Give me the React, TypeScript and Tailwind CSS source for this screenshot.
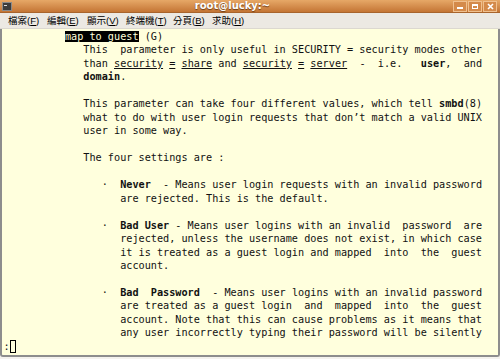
import React from 'react';

type Seg = { t: string; b?: boolean; u?: boolean; r?: boolean };

const L = (...segs: (string | Seg)[]): Seg[] =>
  segs.map((s) => (typeof s === 'string' ? { t: s } : s));

const pad = (n: number) => ' '.repeat(n);

const lines: Seg[][] = [
  L(pad(10), { t: 'map to guest', r: true }, ' (G)'),
  L(pad(13) + 'This  parameter is only useful in SECURITY = security modes other'),
  L(
    pad(13) + 'than ',
    { t: 'security', u: true },
    ' ',
    { t: '=', u: true },
    ' ',
    { t: 'share', u: true },
    ' and ',
    { t: 'security', u: true },
    ' ',
    { t: '=', u: true },
    ' ',
    { t: 'server', u: true },
    '  -  i.e.   ',
    { t: 'user', b: true },
    ',  and'
  ),
  L(pad(13), { t: 'domain', b: true }, '.'),
  L(''),
  L(pad(13) + 'This parameter can take four different values, which tell ', { t: 'smbd', b: true }, '(8)'),
  L(pad(13) + 'what to do with user login requests that don’t match a valid UNIX'),
  L(pad(13) + 'user in some way.'),
  L(''),
  L(pad(13) + 'The four settings are :'),
  L(''),
  L(pad(16) + '·  ', { t: 'Never', b: true }, '  - Means user login requests with an invalid password'),
  L(pad(19) + 'are rejected. This is the default.'),
  L(''),
  L(pad(16) + '·  ', { t: 'Bad User', b: true }, ' - Means user logins with an invalid  password  are'),
  L(pad(19) + 'rejected, unless the username does not exist, in which case'),
  L(pad(19) + 'it is treated as a guest login and mapped  into  the  guest'),
  L(pad(19) + 'account.'),
  L(''),
  L(pad(16) + '·  ', { t: 'Bad  Password', b: true }, '  - Means user logins with an invalid password'),
  L(pad(19) + 'are treated as a guest login  and  mapped  into  the  guest'),
  L(pad(19) + 'account. Note that this can cause problems as it means that'),
  L(pad(19) + 'any user incorrectly typing their password will be silently'),
];

const menus: [string, string][] = [
  ['檔案', 'F'],
  ['編輯', 'E'],
  ['顯示', 'V'],
  ['終端機', 'T'],
  ['分頁', 'B'],
  ['求助', 'H'],
];

function TitleBar() {
  return (
    <div className="relative h-[13px] flex items-center bg-gradient-to-b from-[#e6a867] to-[#c47534] border-b border-[#a8642c]">
      <div className="ml-[2px] w-[10px] h-[9px] bg-[#3c3c3c] border border-[#8a8a8a] flex items-start pl-[1px]">
        <span className="block w-[3px] h-[1px] mt-[2px] bg-[#dcdcdc]" />
      </div>
      <div className="flex-1 text-center text-white font-bold text-[10px] leading-none [text-shadow:0_1px_1px_#6b3a12] font-['DejaVu_Sans',sans-serif]">
        root@lucky:~
      </div>
      <div className="flex gap-[1px] mr-[3px]">
        {['min', 'max', 'close'].map((k) => (
          <div
            key={k}
            className="w-[14px] h-[11px] border border-[#f0c08e] bg-[#d48a4a] flex items-center justify-center"
          >
            {k === 'min' && <span className="block w-[6px] h-[2px] mt-[4px] bg-white" />}
            {k === 'max' && <span className="block w-[6px] h-[5px] border border-white border-t-2" />}
            {k === 'close' && (
              <svg width="7" height="7" viewBox="0 0 7 7">
                <path d="M1 1 L6 6 M6 1 L1 6" stroke="white" strokeWidth="1.6" />
              </svg>
            )}
          </div>
        ))}
      </div>
    </div>
  );
}

function MenuBar() {
  return (
    <div className="h-[16px] grid grid-cols-[39px_40px_39px_47px_39px_39px] items-center bg-[#ece9e3] border-b border-[#dcd8d0] pl-[8px] text-[9.5px] leading-none text-black font-['Liberation_Sans','Noto_Sans_CJK_TC',sans-serif]">
      {menus.map(([label, key]) => (
        <span key={key} className="whitespace-nowrap">
          {label}(<span className="underline">{key}</span>)
        </span>
      ))}
    </div>
  );
}

export default function App() {
  return (
    <div className="w-[500px] h-[359px] overflow-hidden bg-[#f4f2ee] flex flex-col">
      <TitleBar />
      <MenuBar />
      <div className="flex-1 mb-[2px] bg-[#ffffdd] border-l-2 border-r-2 border-b-2 border-[#8d8d8d] rounded-b-[3px] pl-[1.6px] pt-[1px] font-['DejaVu_Sans_Mono',monospace] text-[10.2px] leading-[13.48px] text-[#111] overflow-hidden">
        {lines.map((segs, i) => (
          <div key={i} className="whitespace-pre h-[13.48px]">
            {segs.map((s, j) => (
              <span
                key={j}
                className={
                  (s.b ? 'font-bold ' : '') +
                  (s.u ? 'underline ' : '') +
                  (s.r ? 'bg-black text-[#ffffdd] ' : '')
                }
              >
                {s.t}
              </span>
            ))}
          </div>
        ))}
        <div className="whitespace-pre h-[13.48px] flex items-center">
          <span>:</span>
          <span className="inline-block w-[6.5px] h-[13px] border border-black" />
        </div>
      </div>
    </div>
  );
}
